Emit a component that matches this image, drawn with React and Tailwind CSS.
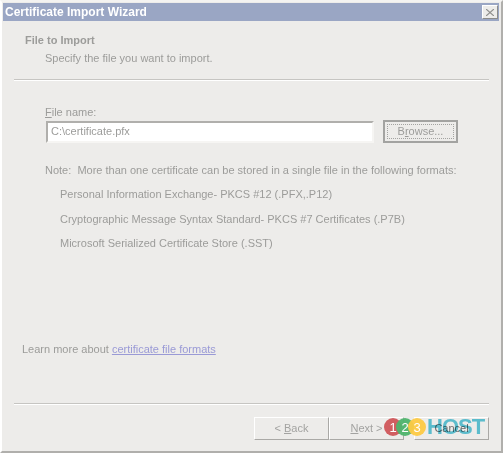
import React from "react";

const font = { fontFamily: '"Liberation Sans", Arial, sans-serif' };

const Separator = () => (
  <div className="mx-[12px] border-t border-b border-t-[#c6c5c2] border-b-white" />
);

const WizardButton = ({ children, dark = false, className = "" }) => (
  <div className={`flex h-[23px] w-[75px] items-center justify-center border border-t-white border-l-white border-r-[#aaa9a6] border-b-[#aaa9a6] bg-[#edecea] ${dark ? "text-[#6b6b6b]" : "text-[#a3a3a1]"} ${className}`}>
    <span>{children}</span>
  </div>
);

const Logo = () => (
  <div className="absolute left-[382px] top-[413px] flex h-[24px] items-center">
    <div className="flex h-[18px] w-[18px] items-center justify-center rounded-full bg-[#d0575a] text-[13px] text-white opacity-95">1</div>
    <div className="-ml-[6px] flex h-[18px] w-[18px] items-center justify-center rounded-full bg-[#4fb56d] text-[13px] text-white opacity-95">2</div>
    <div className="-ml-[6px] flex h-[18px] w-[18px] items-center justify-center rounded-full bg-[#fdcb45] text-[13px] text-white opacity-95">3</div>
    <div className="ml-px text-[22px] font-bold leading-none tracking-[-1px] text-[#62cbdf] mix-blend-multiply">HOST</div>
  </div>
);

export default function App() {
  return (
    <div className="relative flex h-[453px] w-[503px] flex-col overflow-hidden border-2 border-l-white border-t-[#f4f3f1] border-r-[#b0afac] border-b-[#b0afac] bg-[#edecea] text-[11px] leading-[13px] text-[#9c9c9a]" style={font}>
      <div className="ml-px mr-[2px] mt-px flex h-[18px] shrink-0 items-center justify-between bg-[#9aa6c4] pl-[2px] pr-px text-[12px] font-bold text-white">
        <span>Certificate Import Wizard</span>
        <div className="flex h-[14px] w-[16px] items-center justify-center border border-t-white border-l-white border-r-[#8c8c8a] border-b-[#8c8c8a] bg-[#edecea]">
          <svg width="8" height="7" viewBox="0 0 8 7" stroke="#8f8f8d" strokeWidth="1.2" fill="none">
            <path d="M0 0 L8 7 M8 0 L0 7" />
          </svg>
        </div>
      </div>

      <div className="ml-[23px] mt-[13px] font-bold">File to Import</div>
      <div className="ml-[43px] mt-[5px]">Specify the file you want to import.</div>
      <div className="mt-[14px]"><Separator /></div>

      <div className="ml-[43px] mt-[25px]"><span className="underline">F</span>ile name:</div>
      <div className="ml-[44px] mt-px flex items-center gap-[9px]">
        <div className="flex h-[22px] w-[328px] items-center border-2 border-t-[#b0afac] border-l-[#b0afac] border-r-[#f6f5f3] border-b-[#f6f5f3] bg-white pl-[3px]">C:\certificate.pfx</div>
        <div className="flex h-[23px] w-[75px] items-center justify-center border-2 border-[#a3a3a1] bg-[#edecea] p-[2px]">
          <div className="flex h-full w-full items-center justify-center border border-dotted border-[#a3a3a1]">B<span className="underline">r</span>owse...</div>
        </div>
      </div>

      <div className="ml-[43px] mt-[21px]">Note:&nbsp; More than one certificate can be stored in a single file in the following formats:</div>
      <div className="ml-[58px] mt-[11px] flex flex-col gap-[11.5px]">
        <div>Personal Information Exchange- PKCS #12 (.PFX,.P12)</div>
        <div>Cryptographic Message Syntax Standard- PKCS #7 Certificates (.P7B)</div>
        <div>Microsoft Serialized Certificate Store (.SST)</div>
      </div>

      <div className="ml-[20px] mt-[93px]">
        Learn more about <span className="text-[#9a9ad6] underline">certificate file formats</span>
      </div>
      <div className="mt-[47px]"><Separator /></div>

      <div className="mr-[12px] mt-[12px] flex justify-end">
        <WizardButton>&lt; <span className="underline">B</span>ack</WizardButton>
        <WizardButton><span className="underline">N</span>ext &gt;</WizardButton>
        <WizardButton dark className="ml-[10px]">Cancel</WizardButton>
      </div>

      <Logo />
    </div>
  );
}
